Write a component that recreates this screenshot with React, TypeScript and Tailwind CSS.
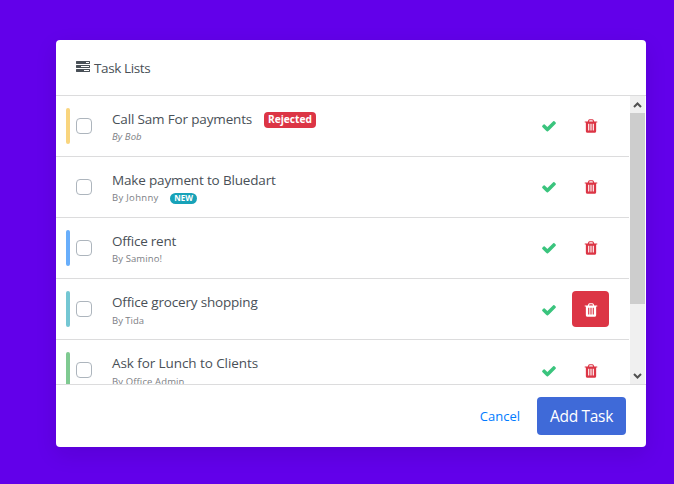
const TASKS_ICON =
  'M1024 1408h640v-128h-640v128zm-384-512h1024v-128h-1024v128zm640-512h384v-128h-384v128zm512 832v256q0 26-19 45t-45 19h-1664q-26 0-45-19t-19-45v-256q0-26 19-45t45-19h1664q26 0 45 19t19 45zm0-512v256q0 26-19 45t-45 19h-1664q-26 0-45-19t-19-45v-256q0-26 19-45t45-19h1664q26 0 45 19t19 45zm0-512v256q0 26-19 45t-45 19h-1664q-26 0-45-19t-19-45v-256q0-26 19-45t45-19h1664q26 0 45 19t19 45z';
const CHECK_ICON =
  'M1671 566q0 40-28 68l-724 724-136 136q-28 28-68 28t-68-28l-136-136-362-362q-28-28-28-68t28-68l136-136q28-28 68-28t68 28l294 295 656-657q28-28 68-28t68 28l136 136q28 28 28 68z';
const TRASH_ICON =
  'M704 1376v-704q0-14-9-23t-23-9h-64q-14 0-23 9t-9 23v704q0 14 9 23t23 9h64q14 0 23-9t9-23zm256 0v-704q0-14-9-23t-23-9h-64q-14 0-23 9t-9 23v704q0 14 9 23t23 9h64q14 0 23-9t9-23zm256 0v-704q0-14-9-23t-23-9h-64q-14 0-23 9t-9 23v704q0 14 9 23t23 9h64q14 0 23-9t9-23zm-544-992h448l-48-117q-7-9-17-11h-317q-10 2-17 11zm928 32v64q0 14-9 23t-23 9h-96v948q0 83-47 143.5t-113 60.5h-832q-66 0-113-58.5t-47-141.5v-952h-96q-14 0-23-9t-9-23v-64q0-14 9-23t23-9h309l70-167q15-37 54-63t79-26h320q40 0 79 26t54 63l70 167h309q14 0 23 9t9 23z';

function Icon({ path, className }: { path: string; className: string }) {
  return (
    <svg viewBox="0 0 1792 1792" fill="currentColor" className={className}>
      <path d={path} />
    </svg>
  );
}

type Task = {
  title: string;
  titleClass: string;
  by: string;
  byClass: string;
  bar: string;
  iconPad: string;
  badge?: string;
  pill?: string;
  active?: boolean;
};

const tasks: Task[] = [
  { title: 'Call Sam For payments', titleClass: 'w-[140px] tracking-[-0.16px]', by: 'By Bob', byClass: 'italic tracking-[0.1px]', bar: 'bg-[#f9d57e]', iconPad: 'pt-0', badge: 'Rejected' },
  { title: 'Make payment to Bluedart', titleClass: 'tracking-[-0.16px]', by: 'By Johnny', byClass: 'w-[47px] tracking-[0.3px]', bar: 'bg-transparent', iconPad: 'pt-0', pill: 'NEW' },
  { title: 'Office rent', titleClass: 'tracking-[-0.25px]', by: 'By Samino!', byClass: 'tracking-[0.1px]', bar: 'bg-[#68aefb]', iconPad: 'pt-0' },
  { title: 'Office grocery shopping', titleClass: 'tracking-[-0.18px]', by: 'By Tida', byClass: 'relative top-px', bar: 'bg-[#74c7d3]', iconPad: 'pt-0.5', active: true },
  { title: 'Ask for Lunch to Clients', titleClass: 'tracking-[-0.08px]', by: 'By Office Admin', byClass: 'relative top-px tracking-[0.12px]', bar: 'bg-[#7fca91]', iconPad: 'pt-0.5' },
];

function TaskRow({ task }: { task: Task }) {
  return (
    <li className="flex h-[61px] shrink-0 items-start border-b border-[#dcdcdd] pr-5 pl-[10px]">
      <span className={`mt-3 h-9 w-1 rounded-[2px] ${task.bar}`} />
      <span className="mt-[22px] ml-[6px] size-4 rounded-[4px] border border-[#adb5bd] bg-white" />
      <div className="ml-5 flex-1 pt-[13px] whitespace-nowrap">
        <div className="flex h-5 items-center text-[13.5px] text-[#495057]">
          <span className={task.titleClass}>{task.title}</span>
          {task.badge && (
            <span className="mt-0.5 ml-3 flex h-4 w-[52px] items-center justify-center rounded-[4px] bg-[#dc3545] text-[10.2px] font-bold text-white">
              {task.badge}
            </span>
          )}
        </div>
        <div className="flex h-4 items-center text-[9.5px] text-[#7d8085]">
          <span className={task.byClass}>{task.by}</span>
          {task.pill && (
            <span className="ml-[11px] flex h-[11px] w-[27px] items-center justify-center rounded-full bg-[#17a2b8] text-[8px] font-bold text-white">
              {task.pill}
            </span>
          )}
        </div>
      </div>
      <button className={`mt-3 flex h-9 w-[37px] items-center justify-center text-[#3ac47d] ${task.iconPad}`}>
        <Icon path={CHECK_ICON} className="size-4" />
      </button>
      <button
        className={`mt-3 ml-[5px] flex h-9 w-[37px] items-center justify-center rounded-[4px] ${task.iconPad} ${task.active ? 'bg-[#dc3545] text-white' : 'text-[#dc3545]'}`}
      >
        <Icon path={TRASH_ICON} className="size-4" />
      </button>
    </li>
  );
}

function Arrow({ d }: { d: string }) {
  return (
    <svg viewBox="0 0 15 17" className="h-[17px] w-[15px]" fill="none" stroke="#505050" strokeWidth="2">
      <path d={d} />
    </svg>
  );
}

export default function App() {
  return (
    <div className="h-[484px] w-[674px] overflow-hidden bg-[#6200ea] pt-10 pl-14 font-['Open_Sans','Noto_Sans',sans-serif]">
      <div className="flex h-[407px] w-[590px] flex-col rounded-[4px] bg-white shadow-[0_7px_22px_rgba(4,9,20,0.1)]">
        <header className="flex h-14 shrink-0 items-center border-b border-[#dcdcdd] pl-5 text-[13.5px] text-[#495057]">
          <Icon path={TASKS_ICON} className="mr-1 mb-0.5 size-[14px]" />
          <span className="pt-0.5 tracking-[-0.38px]">Task Lists</span>
        </header>
        <div className="flex h-[288px] shrink-0">
          <ul className="mr-px flex flex-1 flex-col overflow-hidden">
            {tasks.map((task) => (
              <TaskRow key={task.title} task={task} />
            ))}
          </ul>
          <div className="flex w-4 flex-col border-r border-white bg-[#f0f0f0]">
            <Arrow d="M4 11 L7.5 7.5 L11 11" />
            <div className="h-[191px] bg-[#cdcdcd]" />
            <div className="flex-1" />
            <Arrow d="M4 7 L7.5 10.5 L11 7" />
          </div>
        </div>
        <footer className="flex flex-1 items-center justify-end rounded-b-[4px] border-t border-[#dcdcdd] pr-5">
          <button className="pt-0.5 text-[13px] text-[#007bff]">Cancel</button>
          <button className="ml-[17px] h-[38px] w-[89px] rounded-[4px] bg-[#3f6ad8] pt-0.5 text-[15.5px] tracking-[-0.3px] whitespace-nowrap text-white">Add Task</button>
        </footer>
      </div>
    </div>
  );
}
